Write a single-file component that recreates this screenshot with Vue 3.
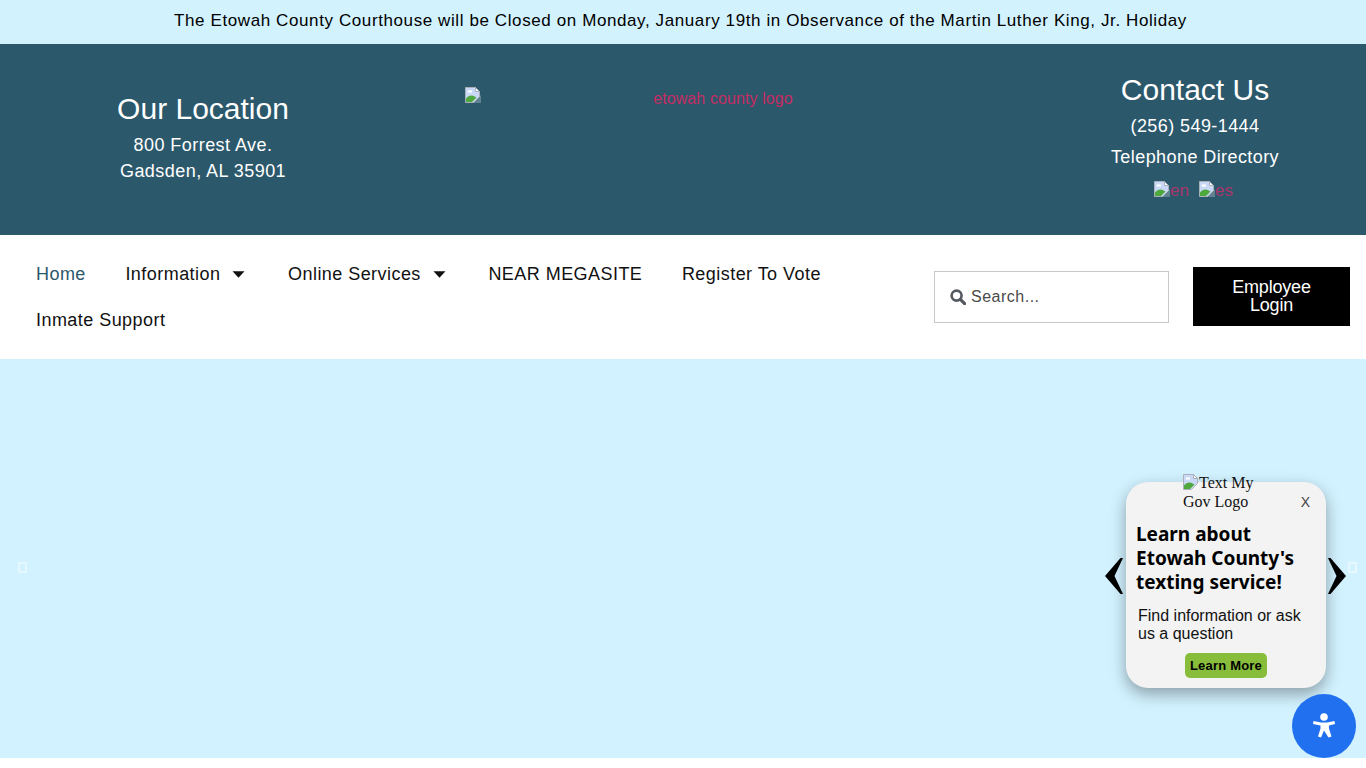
<script setup>
const navItems = [
  { label: 'Home', active: true },
  { label: 'Information', caret: true },
  { label: 'Online Services', caret: true },
  { label: 'NEAR MEGASITE' },
  { label: 'Register To Vote' },
  { label: 'Inmate Support' }
]
</script>

<template>
  <div class="page">
    <svg class="defs" aria-hidden="true">
      <symbol id="broken-img" viewBox="0 0 16 16">
        <path d="M.5.5h10l4 4v5l-6 6H.5z" fill="#c9d8f6" stroke="#a9b0ba"/>
        <path d="M10.500.5v4h4z" fill="#fff" stroke="#a9b0ba"/>
        <path d="M3 3.500h4v2H2.500z" fill="#fff"/>
        <path d="M1 15v-3.500c2.500-3.500 6-3.800 9-1.800l1.500.8L7 15z" fill="#4fa83d"/>
        <path d="M8 16l8-8v8z" fill="#fff" fill-opacity=".25"/>
      </symbol>
    </svg>

    <div class="notice">The Etowah County Courthouse will be Closed on Monday, January 19th in Observance of the Martin Luther King, Jr. Holiday</div>

    <header class="header">
      <div class="location">
        <h2 class="head">Our Location</h2>
        <p class="addr">800 Forrest Ave.</p>
        <p class="addr">Gadsden, AL 35901</p>
      </div>
      <a class="logo">
        <svg class="broken"><use href="#broken-img"/></svg>
        <span class="logo-alt">etowah county logo</span>
      </a>
      <div class="contact">
        <h2 class="head">Contact Us</h2>
        <p class="phone">(256) 549-1444</p>
        <p class="dir">Telephone Directory</p>
        <div class="langs">
          <span class="lang"><svg class="broken"><use href="#broken-img"/></svg>en</span>
          <span class="lang"><svg class="broken"><use href="#broken-img"/></svg>es</span>
        </div>
      </div>
    </header>

    <nav class="navbar">
      <ul class="menu">
        <li v-for="item in navItems" :key="item.label" class="item" :class="{ active: item.active }">
          {{ item.label }}
          <svg v-if="item.caret" class="caret" viewBox="0 0 13 7"><path d="M0.500 0.300h12L6.500 6.700z" fill="#111"/></svg>
        </li>
      </ul>
      <div class="search">
        <svg class="glass" viewBox="0 0 16 16"><circle cx="6.600" cy="6.600" r="5" fill="none" stroke="#54595f" stroke-width="2.600"/><path d="M10.400 10.400l4.200 4.200" stroke="#54595f" stroke-width="3.200" stroke-linecap="round"/></svg>
        <span class="placeholder">Search...</span>
      </div>
      <a class="login">Employee<br>Login</a>
    </nav>

    <section class="hero">
      <span class="tofu tofu-left"></span>
      <span class="tofu tofu-right"></span>
      <svg class="chev chev-left" viewBox="0 0 18 36"><path d="M15.500 0H18L9.500 18 18 36h-2.500L0 18z" fill="#000"/></svg>
      <svg class="chev chev-right" viewBox="0 0 18 36"><path d="M2.500 0H0l8.500 18L0 36h2.500L18 18z" fill="#000"/></svg>

      <div class="widget">
        <div class="widget-logo"><svg class="broken"><use href="#broken-img"/></svg>Text My Gov Logo</div>
        <span class="close">X</span>
        <h3 class="w-title">Learn about Etowah County's texting service!</h3>
        <p class="w-text">Find information or ask us a question</p>
        <div class="w-action"><a class="w-btn">Learn More</a></div>
      </div>

      <div class="a11y">
        <svg viewBox="0 0 24 26" width="24" height="26"><circle cx="12" cy="4" r="3.800" fill="#fff"/><path d="M1.500 8L9 9.500h6L22.500 8l.5 3-6 1.500v3l2.500 8-3 1L12 17.500 9 24.500l-3-1 2.500-8v-3L1 11z" fill="#fff"/></svg>
      </div>
    </section>
    <div class="tail"></div>
  </div>
</template>

<style>
html, body { margin: 0; overflow: hidden; background: #fff; }
</style>

<style scoped>
.page { position: relative; font-family: "Liberation Sans", Arial, sans-serif; width: 1366px; height: 768px; overflow: hidden; }
.defs { position: absolute; width: 0; height: 0; }
p, h2, h3, ul { margin: 0; padding: 0; font-weight: normal; }
.notice { height: 44px; box-sizing: border-box; padding-right: 5px; line-height: 41px; background: #d2f2fe; color: #000; text-align: center; font-size: 17px; letter-spacing: .6px; }

.header { height: 191px; background: #2c586b; color: #fff; display: grid; grid-template-columns: 406px 59px 516px 43px 342px; }
.location { grid-column: 1; text-align: center; padding-top: 47px; }
.logo { grid-column: 3; display: grid; grid-template-columns: 16px 1fr 16px; align-items: start; padding-top: 43px; color: #c42c63; font-size: 16px; letter-spacing: .1px; }
.logo-alt { text-align: center; line-height: 24px; }
.contact { grid-column: 5; text-align: center; padding-top: 27px; }
.head { font-size: 30px; line-height: 36px; }
.addr { font-size: 18px; line-height: 26px; letter-spacing: .45px; }
.location .head { margin-bottom: 5px; }
.contact .head { margin-bottom: 3px; padding-top: 1px; }
.phone, .dir { font-size: 18px; line-height: 31px; letter-spacing: .42px; }
.langs { display: flex; justify-content: center; gap: 10px; margin-top: 8px; padding-right: 3px; color: #a8356b; font-size: 17px; line-height: 20px; }
.lang { display: flex; align-items: flex-start; }
.broken { width: 16px; height: 16px; flex: none; }

.navbar { height: 124px; background: #fff; display: flex; align-items: center; padding: 0 16px 0 16px; box-sizing: border-box; }
.menu { list-style: none; width: 918px; flex: none; display: flex; flex-wrap: wrap; align-content: center; }
.item { display: flex; align-items: center; height: 46px; padding: 0 19.800px; font-size: 18px; letter-spacing: .45px; color: #111; white-space: nowrap; }
.item:first-child, .item:last-child { padding-left: 20px; }
.item.active { color: #2c586b; }
.caret { width: 13px; height: 7px; margin-left: 12px; margin-right: 3px; }
.search { width: 235px; height: 52px; box-sizing: border-box; border: 1px solid #c8c8c8; display: flex; align-items: center; padding-left: 15px; gap: 5px; flex: none; }
.glass { width: 16px; height: 16px; flex: none; }
.placeholder { font-size: 16px; letter-spacing: .5px; color: #4a4a4a; }
.login { width: 157px; height: 59px; box-sizing: border-box; padding-bottom: 2px; margin-left: 24px; margin-bottom: 1px; background: #000; color: #fff; flex: none; display: flex; align-items: center; justify-content: center; text-align: center; font-size: 18px; line-height: 18px; letter-spacing: -.2px; }

.hero { position: relative; height: 399px; background: #d2f2ff; }
.tail { height: 10px; background: #fff; }
.tofu { position: absolute; top: 203px; width: 9px; height: 11px; border: 2px solid #e6f8ff; box-sizing: border-box; }
.tofu-left { left: 18px; }
.tofu-right { left: 1348px; }
.chev { position: absolute; top: 199px; width: 18px; height: 36px; }
.chev-left { left: 1105px; }
.chev-right { left: 1328px; }

.widget { position: absolute; left: 1126px; top: 123px; width: 200px; height: 206px; box-sizing: border-box; background: #f3f3f3; border-radius: 22px; box-shadow: 0 6px 16px rgba(0, 0, 0, .35); padding: 40px 10px 0; }
.widget-logo { position: absolute; left: 57px; top: -8px; width: 86px; font-family: "Liberation Serif", serif; font-size: 16px; line-height: 18.500px; color: #111; }
.widget-logo .broken { vertical-align: -2px; }
.close { position: absolute; right: 16px; top: 12px; font-size: 14px; line-height: 16px; color: #444; }
.w-title { font-family: "Noto Sans", sans-serif; font-weight: 700; font-size: 19px; line-height: 24px; color: #000; }
.w-text { font-size: 16px; line-height: 18px; color: #111; margin: 13px 0 0 2px; }
.w-action { display: flex; justify-content: center; margin-top: 10px; }
.w-btn { background: #88bd3c; color: #000; font-size: 13px; font-weight: 700; border-radius: 5px; padding: 0 5px; height: 25px; line-height: 25px; letter-spacing: .2px; }

.a11y { position: absolute; left: 1292px; top: 335px; width: 64px; height: 64px; border-radius: 50%; background: #2170f0; display: flex; align-items: center; justify-content: center; }
</style>
